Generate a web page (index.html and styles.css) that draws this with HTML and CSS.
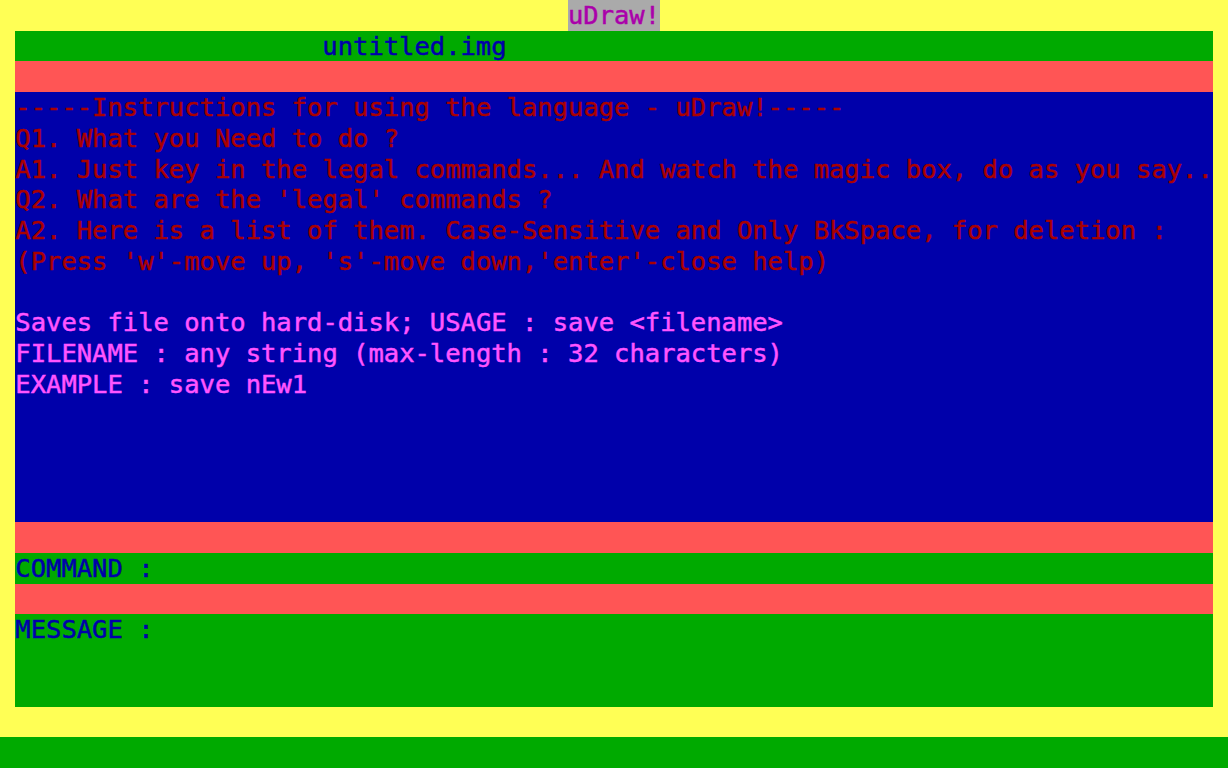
FILE: index.html
```html
<!DOCTYPE html>
<html>
<head>
<meta charset="utf-8">
<title>uDraw!</title>
<link rel="stylesheet" href="styles.css">
</head>
<body>
<div class="screen">
  <div class="frame">
    <div class="title"><span class="title-text">uDraw!</span></div>
    <div class="panel">
      <div class="row green filename">untitled.img</div>
      <div class="row red"></div>
      <div class="help">
        <div class="line warn">-----Instructions for using the language - uDraw!-----</div>
        <div class="line warn">Q1. What you Need to do ?</div>
        <div class="line warn">A1. Just key in the legal commands... And watch the magic box, do as you say..</div>
        <div class="line warn">Q2. What are the 'legal' commands ?</div>
        <div class="line warn">A2. Here is a list of them. Case-Sensitive and Only BkSpace, for deletion :</div>
        <div class="line warn">(Press 'w'-move up, 's'-move down,'enter'-close help)</div>
        <div class="line"></div>
        <div class="line info">Saves file onto hard-disk; USAGE : save &lt;filename&gt;</div>
        <div class="line info">FILENAME : any string (max-length : 32 characters)</div>
        <div class="line info">EXAMPLE : save nEw1</div>
      </div>
      <div class="row red"></div>
      <div class="row green label">COMMAND :</div>
      <div class="row red"></div>
      <div class="message green label">MESSAGE :</div>
    </div>
  </div>
  <div class="row green status"></div>
</div>
</body>
</html>
```

FILE: styles.css
```css
:root {
  --cw: 15.35px;
  --rh: 30.72px;
  --yellow: #ffff55;
  --green: #00aa00;
  --lred: #ff5555;
  --blue: #0000aa;
  --red: #aa0000;
  --lmagenta: #ff55ff;
  --magenta: #aa00aa;
  --gray: #aaaaaa;
}

html, body {
  margin: 0;
  padding: 0;
  background: var(--yellow);
}

.screen {
  width: 1228px;
  height: 768px;
  display: flex;
  flex-direction: column;
  overflow: hidden;
  font-family: "DejaVu Sans Mono", monospace;
  font-size: 25.5px;
  line-height: var(--rh);
  white-space: pre;
  -webkit-text-stroke: 0.5px currentColor;
}

.frame {
  background: var(--yellow);
  padding: 0 var(--cw) var(--rh) var(--cw);
  display: flex;
  flex-direction: column;
}

.title {
  height: var(--rh);
  text-align: center;
}

.title-text {
  background: var(--gray);
  color: var(--magenta);
  display: inline-block;
  height: var(--rh);
}

.panel {
  display: flex;
  flex-direction: column;
}

.row {
  height: var(--rh);
  overflow: hidden;
}

.green { background: var(--green); }
.red { background: var(--lred); }

.filename {
  color: var(--blue);
  padding-left: calc(20 * var(--cw));
}

.label {
  color: var(--blue);
}

.help {
  background: var(--blue);
  height: calc(14 * var(--rh));
  display: flex;
  flex-direction: column;
  overflow: hidden;
}

.line {
  height: var(--rh);
  overflow: hidden;
}

.warn { color: var(--red); }
.info { color: var(--lmagenta); }

.message {
  height: calc(3 * var(--rh));
}

.status {
  flex: 1;
}
```
